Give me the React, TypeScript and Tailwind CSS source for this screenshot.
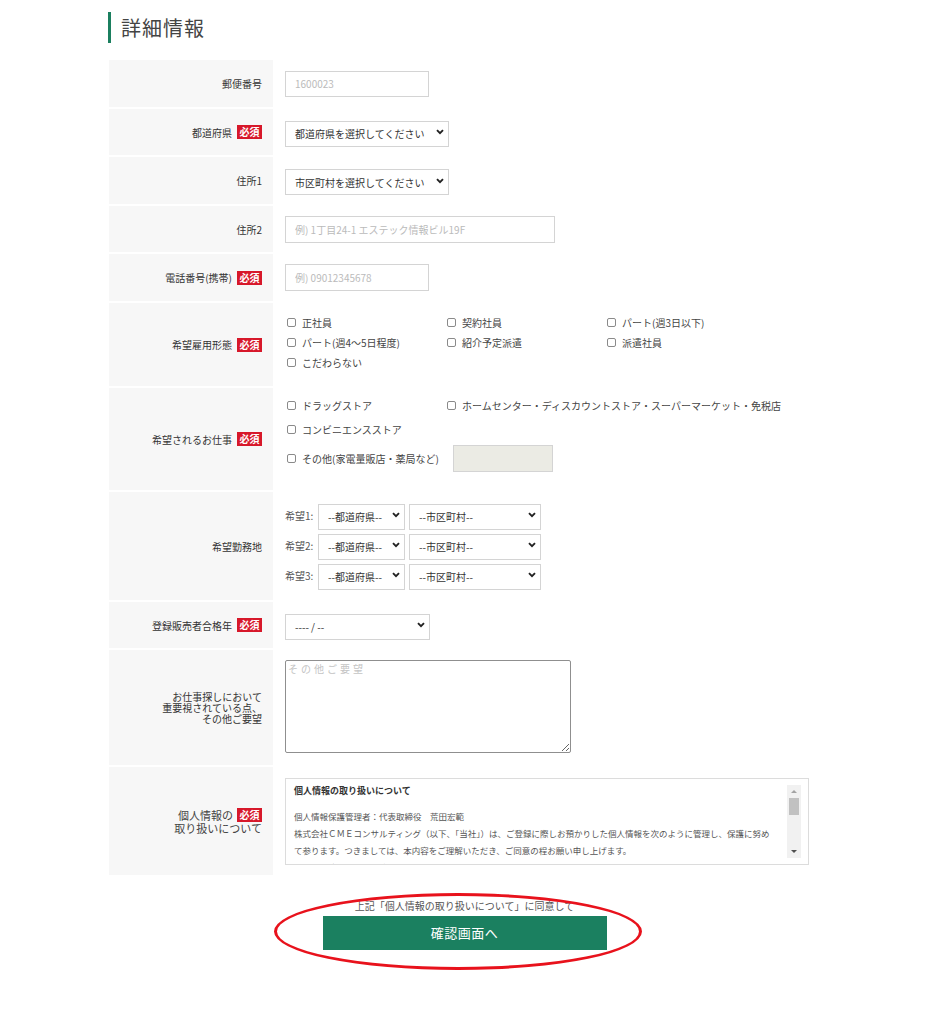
import React from "react";

const font = { fontFamily: '"Noto Sans CJK JP", "Noto Sans", sans-serif' };

const Badge: React.FC = () => (
   <span className="inline-flex items-center justify-center bg-[#d7182a] text-white text-[10px] leading-none w-[25px] h-[14px] font-bold">
      必須
   </span>
);

const Chevron: React.FC = () => (
   <svg
      className="pointer-events-none absolute right-[5px] top-1/2 -translate-y-1/2"
      width="8"
      height="6"
      viewBox="0 0 8 6"
   >
      <path d="M1 1.2 L4 4.2 L7 1.2" fill="none" stroke="#222" strokeWidth="1.9" />
   </svg>
);

const Select: React.FC<{ w: string; text: string }> = ({ w, text }) => (
   <div className={`relative ${w} h-[26px]`}>
      <select
         className="appearance-none w-full h-full border border-[#d4d4d4] bg-white pl-[9px] text-[10px] text-[#333] outline-none"
         style={font}
         defaultValue={text}
      >
         <option>{text}</option>
      </select>
      <Chevron />
   </div>
);

const Check: React.FC<{ label: string }> = ({ label }) => (
   <label className="flex items-center gap-[6px] text-[10px] text-[#444] whitespace-nowrap">
      <input
         type="checkbox"
         className="appearance-none w-[9px] h-[9px] border border-[#8a8a8a] rounded-[2px] bg-white shrink-0"
      />
      {label}
   </label>
);

const Row: React.FC<{
   label: React.ReactNode;
   h: string;
   top?: boolean;
   pt?: string;
   children: React.ReactNode;
}> = ({ label, h, top, pt, children }) => (
   <div className={`flex ${h}`}>
      <div className="w-[164px] shrink-0 bg-[#f7f7f7] flex items-center justify-end pr-[11px] text-[10px] text-[#333] text-right">
         {label}
      </div>
      <div className={`flex-1 pl-[12px] flex ${top ? `items-start ${pt}` : "items-center"}`}>
         {children}
      </div>
   </div>
);

const App: React.FC = () => {
   const policyLines = [
      "１．個人情報の利用目的",
      "当社は、お預かりした個人情報を、お仕事のご紹介、求人企業への推薦、",
      "ご登録者様への各種ご連絡のために利用いたします。",
      "２．個人情報の第三者提供",
      "当社は、ご本人の同意なく個人情報を第三者へ提供いたしません。",
      "３．個人情報の委託",
      "当社は、利用目的の達成に必要な範囲で個人情報の取り扱いを委託する場合があります。",
      "４．開示等の請求",
      "ご本人からの開示・訂正・削除等のご請求には、速やかに対応いたします。",
   ];

   return (
      <div className="min-h-[1024px] bg-white pt-[12px]" style={font}>
         <div className="w-[711px] ml-[109px]">
            <h2 className="flex items-center h-[31px] ml-[-1px]">
               <span className="w-[3px] h-[31px] bg-[#1b7f5f]" />
               <span className="ml-[10px] text-[20px] text-[#444] tracking-[1px] leading-none">
                  詳細情報
               </span>
            </h2>

            <div className="mt-[17px] flex flex-col gap-[2px]">
               <Row label="郵便番号" h="h-[47px]">
                  <input
                     className="w-[144px] h-[26px] border border-[#d4d4d4] px-[9px] text-[10px] placeholder:text-[#bbb] outline-none"
                     style={font}
                     placeholder="1600023"
                  />
               </Row>
               <Row
                  h="h-[46px]"
                  label={
                     <span className="flex items-center gap-[5px]">
                        都道府県 <Badge />
                     </span>
                  }
               >
                  <Select w="w-[164px]" text="都道府県を選択してください" />
               </Row>
               <Row label="住所1" h="h-[47px]">
                  <Select w="w-[164px]" text="市区町村を選択してください" />
               </Row>
               <Row label="住所2" h="h-[46px]">
                  <input
                     className="w-[270px] h-[27px] border border-[#d4d4d4] px-[9px] text-[10px] placeholder:text-[#bbb] outline-none"
                     style={font}
                     placeholder="例) 1丁目24-1 エステック情報ビル19F"
                  />
               </Row>
               <Row
                  h="h-[47px]"
                  label={
                     <span className="flex items-center gap-[5px]">
                        電話番号(携帯) <Badge />
                     </span>
                  }
               >
                  <input
                     className="w-[144px] h-[27px] border border-[#d4d4d4] px-[9px] text-[10px] placeholder:text-[#bbb] outline-none"
                     style={font}
                     placeholder="例) 09012345678"
                  />
               </Row>
               <Row
                  h="h-[83px]"
                  top
                  pt="pt-[9px]"
                  label={
                     <span className="flex items-center gap-[5px]">
                        希望雇用形態 <Badge />
                     </span>
                  }
               >
                  <div className="grid grid-cols-[160px_160px_160px] auto-rows-[20px] items-center pl-[2px]">
                     <Check label="正社員" />
                     <Check label="契約社員" />
                     <Check label="パート(週3日以下)" />
                     <Check label="パート(週4～5日程度)" />
                     <Check label="紹介予定派遣" />
                     <Check label="派遣社員" />
                     <Check label="こだわらない" />
                  </div>
               </Row>
               <Row
                  h="h-[102px]"
                  top
                  pt="pt-[5px]"
                  label={
                     <span className="flex items-center gap-[5px]">
                        希望されるお仕事 <Badge />
                     </span>
                  }
               >
                  <div className="flex flex-col pl-[2px]">
                     <div className="flex h-[24px] items-center">
                        <div className="w-[160px]">
                           <Check label="ドラッグストア" />
                        </div>
                        <Check label="ホームセンター・ディスカウントストア・スーパーマーケット・免税店" />
                     </div>
                     <div className="flex h-[24px] items-center">
                        <Check label="コンビニエンスストア" />
                     </div>
                     <div className="flex h-[27px] items-center mt-[4px] gap-[14px]">
                        <Check label="その他(家電量販店・薬局など)" />
                        <input
                           disabled
                           className="w-[100px] h-[27px] border border-[#d4d4d4] bg-[#ebebe4]"
                        />
                     </div>
                  </div>
               </Row>
               <Row label="希望勤務地" h="h-[108px]" top pt="pt-[10px]">
                  <div className="flex flex-col gap-[4px]">
                     {[1, 2, 3].map((n) => (
                        <div key={n} className="flex items-center">
                           <span className="w-[33px] text-[10px] text-[#555]">希望{n}:</span>
                           <Select w="w-[87px]" text="--都道府県--" />
                           <div className="ml-[4px]">
                              <Select w="w-[132px]" text="--市区町村--" />
                           </div>
                        </div>
                     ))}
                  </div>
               </Row>
               <Row
                  h="h-[46px]"
                  label={
                     <span className="flex items-center gap-[5px]">
                        登録販売者合格年 <Badge />
                     </span>
                  }
               >
                  <Select w="w-[145px]" text="---- / --" />
               </Row>
               <Row
                  h="h-[115px]"
                  top
                  pt="pt-[10px]"
                  label={
                     <span className="leading-[11px] block">
                        お仕事探しにおいて
                        <br />
                        重要視されている点、
                        <br />
                        その他ご要望
                     </span>
                  }
               >
                  <textarea
                     className="w-[286px] h-[93px] border border-[#8f8f8f] rounded-[2px] px-[2px] py-0 text-[10px] tracking-[3px] placeholder:text-[#c4c4c4] outline-none"
                     style={font}
                     placeholder="その他ご要望"
                  />
               </Row>
               <Row
                  h="h-[108px]"
                  top
                  pt="pt-[11px]"
                  label={
                     <span className="block leading-[12px] text-[11px] text-[#444]">
                        <span className="flex items-center justify-end gap-[4px]">
                           個人情報の <Badge />
                        </span>
                        取り扱いについて
                     </span>
                  }
               >
                  <div className="relative w-[524px] h-[87px] border border-[#dcdcdc]">
                     <div className="h-full overflow-y-scroll [scrollbar-width:none] pl-[8px] pr-[24px] pt-[6px] text-[#555]">
                        <p className="text-[9px] font-bold text-[#333] leading-[12px]">
                           個人情報の取り扱いについて
                        </p>
                        <p className="mt-[11px] text-[8.5px] leading-[17px] whitespace-nowrap">
                           個人情報保護管理者：代表取締役　荒田宏範
                        </p>
                        <p className="text-[8.5px] leading-[17px] whitespace-nowrap">
                           株式会社ＣＭＥコンサルティング（以下、「当社」）は、ご登録に際しお預かりした個人情報を次のように管理し、保護に努め
                           <br />
                           て参ります。つきましては、本内容をご理解いただき、ご同意の程お願い申し上げます。
                        </p>
                        {policyLines.map((l, i) => (
                           <p key={i} className="text-[8.5px] leading-[17px] whitespace-nowrap">
                              {l}
                           </p>
                        ))}
                     </div>
                     <div className="absolute right-[7px] top-[6px] bottom-[6px] w-[14px] bg-[#f1f1f1] flex flex-col items-center">
                        <svg width="14" height="13" viewBox="0 0 14 13">
                           <path d="M4 8 L7 5 L10 8 Z" fill="#a3a3a3" />
                        </svg>
                        <div className="w-[10px] h-[17px] bg-[#c1c1c1]" />
                        <div className="flex-1" />
                        <svg width="14" height="13" viewBox="0 0 14 13">
                           <path d="M4 5 L7 8 L10 5 Z" fill="#505050" />
                        </svg>
                     </div>
                  </div>
               </Row>
            </div>

            <div className="relative flex flex-col items-center mt-[25px]">
               <p className="text-[10px] text-[#555] leading-[12px]">
                  上記「個人情報の取り扱いについて」に同意して
               </p>
               <button className="mt-[4px] w-[284px] h-[34px] bg-[#1b8060] text-white text-[13px] tracking-[0.5px]">
                  確認画面へ
               </button>
               <div className="absolute left-[165px] top-[-7px] w-[368px] h-[77px] rounded-[50%] border-[3px] border-[#e8121c] pointer-events-none" />
            </div>
         </div>
      </div>
   );
};

export default App;
